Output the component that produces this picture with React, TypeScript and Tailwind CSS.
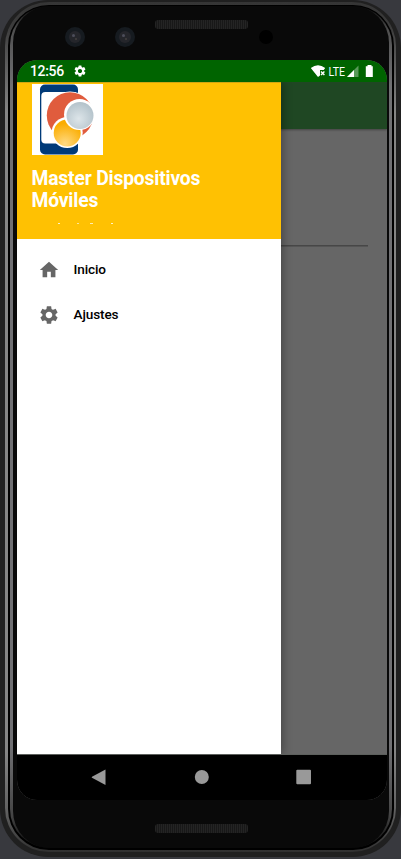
import React from "react";

const GEAR =
  "M19.14 12.94c.04-.3.06-.61.06-.94 0-.32-.02-.64-.07-.94l2.03-1.58c.18-.14.23-.41.12-.61l-1.92-3.32c-.12-.22-.37-.29-.59-.22l-2.39.96c-.5-.38-1.03-.7-1.62-.94l-.36-2.54c-.04-.24-.24-.41-.48-.41h-3.84c-.24 0-.43.17-.47.41l-.36 2.54c-.59.24-1.13.57-1.62.94l-2.39-.96c-.22-.08-.47 0-.59.22L2.74 8.87c-.12.21-.08.47.12.61l2.03 1.58c-.05.3-.09.63-.09.94s.02.64.07.94l-2.03 1.58c-.18.14-.23.41-.12.61l1.92 3.32c.12.22.37.29.59.22l2.39-.96c.5.38 1.03.7 1.62.94l.36 2.54c.05.24.24.41.48.41h3.84c.24 0 .44-.17.47-.41l.36-2.54c.59-.24 1.13-.56 1.62-.94l2.39.96c.22.08.47 0 .59-.22l1.92-3.32c.12-.22.07-.47-.12-.61l-2.01-1.58zM12 15.6c-1.98 0-3.6-1.62-3.6-3.6s1.62-3.6 3.6-3.6 3.6 1.62 3.6 3.6-1.62 3.6-3.6 3.6z";

function Icon({ d, className }: { d: string; className: string }) {
  return (
    <svg viewBox="0 0 24 24" fill="currentColor" className={className}>
      <path d={d} />
    </svg>
  );
}

function Speaker() {
  return (
    <div className="ml-[138px] h-[9px] w-[93px] shrink-0 rounded-[3px] bg-[#1a1a1a] bg-[repeating-linear-gradient(90deg,#242424_0_1px,#181818_1px_2px)]" />
  );
}

function Camera() {
  return (
    <div className="flex size-[20px] items-center justify-center rounded-full bg-[#161b20]">
      <div className="relative size-[12px] rounded-full bg-[#25262b]">
        <div className="absolute top-[3px] left-[3px] size-[3px] rounded-full bg-[#4d4e5a]" />
        <div className="absolute top-[7px] left-[6px] size-[2px] rounded-full bg-[#44413f]" />
      </div>
    </div>
  );
}

function Logo() {
  return (
    <svg viewBox="0 0 71 71" className="block size-[71px] bg-white">
      <defs>
        <radialGradient id="silver" cx="45%" cy="62%" r="62%">
          <stop offset="0" stopColor="#dde5e9" />
          <stop offset="1" stopColor="#b3c2ca" />
        </radialGradient>
        <radialGradient id="amber" cx="42%" cy="90%" r="75%">
          <stop offset="0" stopColor="#ffda83" />
          <stop offset="1" stopColor="#fbad00" />
        </radialGradient>
      </defs>
      <rect x="8" y="0.5" width="38" height="70" rx="5" fill="#003a78" />
      <rect x="9.300" y="8" width="36" height="51.500" rx="4" fill="#fff" />
      <circle cx="38" cy="31.500" r="24" fill="#fff" />
      <circle cx="38" cy="31.500" r="23.200" fill="#e05c3d" />
      <circle cx="35.200" cy="48.500" r="15.500" fill="#fff" />
      <circle cx="35.200" cy="49" r="13.500" fill="url(#amber)" />
      <circle cx="47.500" cy="30.500" r="15.500" fill="#fff" />
      <circle cx="48" cy="31.500" r="13.500" fill="url(#silver)" />
    </svg>
  );
}

function StatusBar() {
  return (
    <header className="relative z-20 flex h-[22px] shrink-0 items-center bg-[#006400] pl-[13px] text-white">
      <span className="w-[43px] text-[14px] leading-[22px] font-medium tracking-[-0.35px]">12:56</span>
      <Icon d={GEAR} className="size-[14px]" />
      <svg viewBox="0 0 64 14" className="ml-auto mr-[13px] h-[14px] w-[64px]">
        <path d="M.8 4Q8-1.400 15.200 4L13.700 6H10v5.600L8 13z" fill="#fff" />
        <path d="m11 7.500 3.400 3.600m0-3.600L11 11.100" stroke="#fff" strokeWidth="1.400" />
        <text x="18.500" y="11.500" fill="#fff" fontSize="12.600" textLength="16.500" lengthAdjust="spacingAndGlyphs">
          LTE
        </text>
        <path d="M48.500 1.500V13H37z" fill="#fff" fillOpacity=".35" />
        <path d="M44 6v7h-7z" fill="#fff" />
        <path d="M57.500 1h4v1.300h1.300V13h-7V2.300h1.700z" fill="#fff" />
      </svg>
    </header>
  );
}

function Drawer() {
  return (
    <aside className="flex w-[263.5px] shrink-0 flex-col bg-white shadow-[2px_0_9px_rgba(0,0,0,0.32)]">
      <div className="h-[157px] border-t border-[#d3a513] bg-[#ffc102] pt-px pl-[14.5px] text-white">
        <Logo />
        <h1 className="mt-[13px] w-[210px] text-[19.3px] leading-[22px] font-bold tracking-[-0.18px]">
          Master Dispositivos Móviles
        </h1>
        <div className="mt-[11px] ml-[26px] flex h-px">
          <span className="w-[2px] bg-white/80" />
          <span className="ml-[17px] w-[2px] bg-white/60" />
          <span className="ml-[11px] w-[3px] bg-white/70" />
          <span className="ml-[18px] w-[2px] bg-white/80" />
        </div>
      </div>
      <nav className="flex flex-col pt-[8px] text-[13.6px] font-medium tracking-[-0.12px] text-black">
        <a className="flex h-[45px] items-center pl-[20.5px]">
          <Icon d="M10 20v-6h4v6h5v-8h3L12 3 2 12h3v8z" className="mr-[14px] size-[22px] text-[#666]" />
          Inicio
        </a>
        <a className="flex h-[45px] items-center pl-[20.5px]">
          <Icon d={GEAR} className="mr-[14px] size-[22px] text-[#666]" />
          Ajustes
        </a>
      </nav>
    </aside>
  );
}

function Screen() {
  return (
    <div className="mt-[31px] flex h-[740px] w-[370px] shrink-0 flex-col overflow-hidden rounded-[20px] bg-[#666]">
      <StatusBar />
      <div className="relative flex min-h-0 flex-1">
        <div className="absolute inset-0">
          <div className="h-[47px] bg-[#1f4723] shadow-[0_1px_2px_rgba(0,0,0,0.35)]" />
          <div className="mt-[116px] mr-[19px] h-[2px] border-t border-[#474747] bg-[#555]" />
        </div>
        <div className="relative z-10 flex">
          <Drawer />
        </div>
      </div>
      <footer className="relative z-20 flex h-[46px] shrink-0 items-center border-t border-[#5d605d] bg-black text-[#999]">
        <svg viewBox="0 0 370 45" className="h-[45px] w-[370px]" fill="currentColor">
          <path d="M88.500 14.500v15.500L75 22.700q-.8-.5 0-1z" />
          <circle cx="184.800" cy="22" r="7" />
          <rect x="279.300" y="14.700" width="14.700" height="14.500" rx="1" />
        </svg>
      </footer>
    </div>
  );
}

export default function App() {
  return (
    <main className="h-[859px] w-[401px] overflow-hidden bg-[#38393e] font-[Roboto,sans-serif]">
      <div className="h-[857px] rounded-[48px] bg-[#202020] pt-[2px] pr-[5px] pb-[5px] pl-[5px]">
        <div className="h-[850px] rounded-[44px] bg-[linear-gradient(180deg,#353535_0,#3c3c3c_25px,#858585_110px,#858585_750px,#606060_810px,#303030_100%)] pt-[3px] pr-[2px] pb-[2px] pl-[3px]">
          <div className="h-[845px] rounded-[41px] bg-black pt-[1px] pr-[2px] pb-[2px] pl-[2px]">
            <div className="h-[842px] rounded-[39px] bg-[linear-gradient(180deg,#090909_0,#505050_25px,#707073_80px,#707073_740px,#444_810px,#0a0a0a_100%)] pr-[3px] pl-[3px]">
              <div className="flex h-[842px] flex-col rounded-[37px] bg-[#090909] pt-[14px] pl-[4px]">
                <Speaker />
                <div className="flex h-0 items-start pl-[48px]">
                  <div className="-mt-[2px] flex w-full gap-[30px]">
                    <Camera />
                    <Camera />
                    <div className="mt-[3px] ml-[94px] size-[14px] shrink-0 rounded-full bg-black" />
                  </div>
                </div>
                <Screen />
                <div className="mt-[24px]">
                  <Speaker />
                </div>
              </div>
            </div>
          </div>
        </div>
      </div>
    </main>
  );
}
